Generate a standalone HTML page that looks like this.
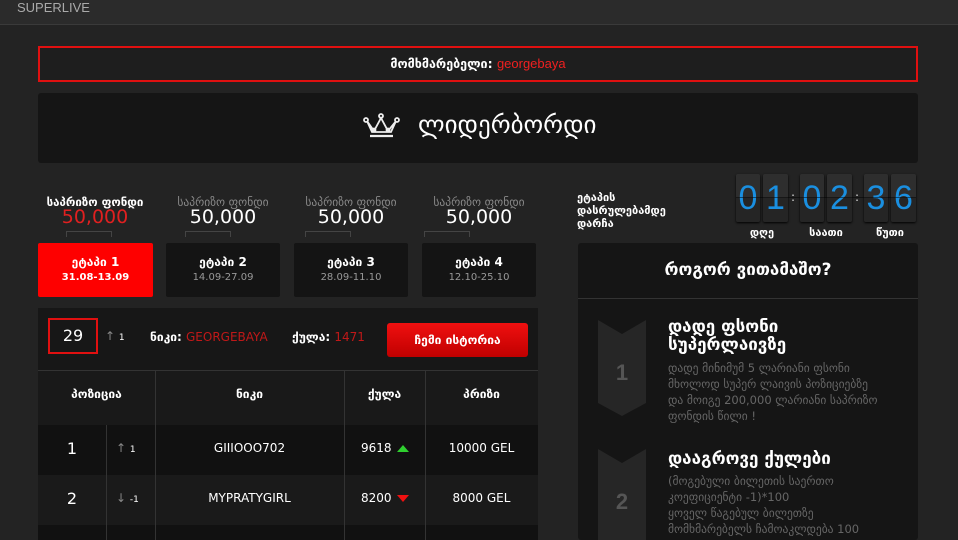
<!DOCTYPE html>
<html><head><meta charset="utf-8"><style>
*{margin:0;padding:0;box-sizing:border-box}
body{width:958px;height:540px;overflow:hidden;background:#232323;font-family:"DejaVu Sans","Liberation Sans",sans-serif;color:#fff;position:relative}
.a{position:absolute}
.c{text-align:center}
.d{position:absolute;top:174px;height:48px;background:linear-gradient(#2e2e2e 50%,#252525 50%);border-radius:2px;font-size:34px;line-height:48px;color:#1a8fe0;text-align:center;font-family:'Liberation Sans',sans-serif;box-shadow:0 1px 2px #000}
</style></head><body>
<div class="a" style="left:0;top:0;width:958px;height:25px;background:#2b2b2b;border-bottom:1px solid #3a3a3a"></div>
<div class="a" style="left:17px;top:0;font-size:13px;color:#aaa;font-family:'Liberation Sans',sans-serif;line-height:15px">SUPERLIVE</div>

<div class="a c" style="left:38px;top:46px;width:880px;height:36px;border:2px solid #e01010;background:#1e1e1e;font-size:12.5px;line-height:32px;font-weight:bold">მომხმარებელი: <span style="color:#f02020;font-weight:normal;font-family:'Liberation Sans',sans-serif;font-size:13px">georgebaya</span></div>

<div class="a" style="left:38px;top:93px;width:880px;height:70px;background:#151515;border-radius:3px"></div>
<svg class="a" style="left:363px;top:113px" width="37" height="26" viewBox="0 0 37 26"><g fill="none" stroke="#eee" stroke-width="1.8"><path d="M4 8 L11 18 L18 5 L25 18 L33 8 L28 19 H9 Z"/><circle cx="3" cy="7" r="2"/><circle cx="18" cy="3" r="2"/><circle cx="34" cy="7" r="2"/><circle cx="11" cy="17" r="1.5"/><circle cx="25" cy="17" r="1.5"/><path d="M7 23 H30" stroke-width="2.2"/></g></svg>
<div class="a" style="left:418px;top:110px;font-size:25px;line-height:30px">ლიდერბორდი</div>

<div class="a c" style="left:34px;top:195px;width:122px;font-size:11.5px;font-weight:bold">საპრიზო ფონდი</div>
<div class="a c" style="left:38px;top:206px;width:114px;font-size:19px;color:#e02020">50,000</div>
<div class="a c" style="left:162px;top:195px;width:122px;font-size:11.5px;color:#888">საპრიზო ფონდი</div>
<div class="a c" style="left:166px;top:206px;width:114px;font-size:19px">50,000</div>
<div class="a c" style="left:290px;top:195px;width:122px;font-size:11.5px;color:#888">საპრიზო ფონდი</div>
<div class="a c" style="left:294px;top:206px;width:114px;font-size:19px">50,000</div>
<div class="a c" style="left:418px;top:195px;width:122px;font-size:11.5px;color:#888">საპრიზო ფონდი</div>
<div class="a c" style="left:422px;top:206px;width:114px;font-size:19px">50,000</div>
<div class="a" style="left:66px;top:231px;width:46px;height:6px;border:1px solid #444;border-bottom:none"></div>
<div class="a" style="left:185px;top:231px;width:46px;height:6px;border:1px solid #444;border-bottom:none"></div>
<div class="a" style="left:305px;top:231px;width:46px;height:6px;border:1px solid #444;border-bottom:none"></div>
<div class="a" style="left:424px;top:231px;width:46px;height:6px;border:1px solid #444;border-bottom:none"></div>

<div class="a c" style="left:38px;top:243px;width:115px;height:54px;background:#fe0000;border-radius:2px;padding-top:12px;font-size:12px;line-height:14px;font-weight:bold">ეტაპი 1<br><span style="font-size:10px">31.08-13.09</span></div>
<div class="a c" style="left:166px;top:243px;width:114px;height:54px;background:#141414;border-radius:2px;padding-top:12px;font-size:12px;line-height:14px;font-weight:bold">ეტაპი 2<br><span style="font-size:10px;color:#999;font-weight:normal">14.09-27.09</span></div>
<div class="a c" style="left:294px;top:243px;width:114px;height:54px;background:#141414;border-radius:2px;padding-top:12px;font-size:12px;line-height:14px;font-weight:bold">ეტაპი 3<br><span style="font-size:10px;color:#999;font-weight:normal">28.09-11.10</span></div>
<div class="a c" style="left:422px;top:243px;width:114px;height:54px;background:#141414;border-radius:2px;padding-top:12px;font-size:12px;line-height:14px;font-weight:bold">ეტაპი 4<br><span style="font-size:10px;color:#999;font-weight:normal">12.10-25.10</span></div>

<div class="a" style="left:38px;top:308px;width:500px;height:232px;background:#171717"></div>
<div class="a c" style="left:48px;top:318px;width:50px;height:36px;border:2px solid #e01010;font-size:16px;line-height:32px">29</div>
<div class="a" style="left:105px;top:329px;font-size:12px;color:#888">↑ <span style="font-size:9px;color:#fff">1</span></div>
<div class="a" style="left:150px;top:330px;font-size:12px;font-weight:bold">ნიკი: <span style="color:#c01818;font-weight:normal">GEORGEBAYA</span></div>
<div class="a" style="left:292px;top:330px;font-size:12px;font-weight:bold">ქულა: <span style="color:#c01818;font-weight:normal">1471</span></div>
<div class="a c" style="left:387px;top:323px;width:141px;height:34px;background:linear-gradient(#f01010,#c00000);border-radius:3px;font-size:12px;font-weight:bold;line-height:34px">ჩემი ისტორია</div>
<div class="a" style="left:38px;top:370px;width:500px;height:1px;background:#333"></div>
<div class="a" style="left:38px;top:371px;width:500px;height:54px;background:#191919"></div>
<div class="a" style="left:38px;top:425px;width:500px;height:50px;background:#111"></div>
<div class="a" style="left:38px;top:475px;width:500px;height:50px;background:#1a1a1a"></div>
<div class="a" style="left:38px;top:525px;width:500px;height:15px;background:#111"></div>
<div class="a" style="left:155px;top:371px;width:1px;height:169px;background:#333"></div>
<div class="a" style="left:344px;top:371px;width:1px;height:169px;background:#333"></div>
<div class="a" style="left:425px;top:371px;width:1px;height:169px;background:#333"></div>
<div class="a" style="left:106px;top:425px;width:1px;height:115px;background:#333"></div>
<div class="a c" style="left:38px;top:387px;width:117px;font-size:12px;font-weight:bold">პოზიცია</div>
<div class="a c" style="left:155px;top:387px;width:189px;font-size:12px;font-weight:bold">ნიკი</div>
<div class="a c" style="left:344px;top:387px;width:81px;font-size:12px;font-weight:bold">ქულა</div>
<div class="a c" style="left:425px;top:387px;width:113px;font-size:12px;font-weight:bold">პრიზი</div>

<div class="a c" style="left:38px;top:439px;width:68px;font-size:16px">1</div>
<div class="a" style="left:116px;top:441px;font-size:12px;color:#888">↑ <span style="font-size:9px;color:#fff">1</span></div>
<div class="a c" style="left:155px;top:441px;width:189px;font-size:12px">GIIIOOO702</div>
<div class="a" style="left:361px;top:441px;font-size:12px">9618 <span style="display:inline-block;width:0;height:0;border-left:6px solid transparent;border-right:6px solid transparent;border-bottom:7px solid #2fd02f;margin-left:2px"></span></div>
<div class="a c" style="left:425px;top:441px;width:113px;font-size:12px">10000 GEL</div>

<div class="a c" style="left:38px;top:489px;width:68px;font-size:16px">2</div>
<div class="a" style="left:116px;top:491px;font-size:12px;color:#888">↓ <span style="font-size:9px;color:#fff">-1</span></div>
<div class="a c" style="left:155px;top:491px;width:189px;font-size:12px">MYPRATYGIRL</div>
<div class="a" style="left:361px;top:491px;font-size:12px">8200 <span style="display:inline-block;width:0;height:0;border-left:6px solid transparent;border-right:6px solid transparent;border-top:7px solid #f01010;margin-left:2px"></span></div>
<div class="a c" style="left:425px;top:491px;width:113px;font-size:12px">8000 GEL</div>

<div class="a" style="left:577px;top:191px;font-size:11px;line-height:13px;font-weight:bold">ეტაპის<br>დასრულებამდე<br>დარჩა</div>
<div class="d" style="left:736px;width:24px">0</div>
<div class="d" style="left:763px;width:25px">1</div>
<div class="a" style="left:791px;top:190px;font-size:12px;color:#ddd">:</div>
<div class="d" style="left:800px;width:24px">0</div>
<div class="d" style="left:827px;width:25px">2</div>
<div class="a" style="left:855px;top:190px;font-size:12px;color:#ddd">:</div>
<div class="d" style="left:864px;width:24px">3</div>
<div class="d" style="left:891px;width:25px">6</div>
<div class="a" style="left:736px;top:197px;width:180px;height:1px;background:rgba(0,0,0,0.5)"></div>
<div class="a c" style="left:736px;top:226px;width:52px;font-size:11px;font-weight:bold">დღე</div>
<div class="a c" style="left:800px;top:226px;width:52px;font-size:11px;font-weight:bold">საათი</div>
<div class="a c" style="left:864px;top:226px;width:52px;font-size:11px;font-weight:bold">წუთი</div>

<div class="a" style="left:578px;top:243px;width:340px;height:297px;background:#151515;border-radius:3px"></div>
<div class="a c" style="left:578px;top:260px;width:340px;font-size:17px;font-weight:bold">როგორ ვითამაშო?</div>
<div class="a" style="left:578px;top:298px;width:340px;height:1px;background:#333"></div>
<svg class="a" style="left:598px;top:320px" width="48" height="220"><path d="M0 0 L24 14 L48 0 V83 L24 96 L0 83 Z" fill="#262626"/><path d="M0 129 L24 143 L48 129 V220 H0 Z" fill="#262626"/><text x="24" y="60" text-anchor="middle" font-family="Liberation Sans" font-weight="bold" font-size="22" fill="#555">1</text><text x="24" y="189" text-anchor="middle" font-family="Liberation Sans" font-weight="bold" font-size="22" fill="#555">2</text></svg>
<div class="a" style="left:668px;top:318px;font-size:17px;line-height:18px;font-weight:bold">დადე ფსონი<br>სუპერლაივზე</div>
<div class="a" style="left:668px;top:360px;font-size:11.5px;line-height:16px;color:#666">დადე მინიმუმ 5 ლარიანი ფსონი<br>მხოლოდ სუპერ ლაივის პოზიციებზე<br>და მოიგე 200,000 ლარიანი საპრიზო<br>ფონდის წილი !</div>
<div class="a" style="left:668px;top:450px;font-size:17px;line-height:18px;font-weight:bold">დააგროვე ქულები</div>
<div class="a" style="left:668px;top:473px;font-size:11.5px;line-height:16px;color:#666">(მოგებული ბილეთის საერთო<br>კოეფიციენტი -1)*100<br>ყოველ წაგებულ ბილეთზე<br>მომხმარებელს ჩამოაკლდება 100</div>
</body></html>
